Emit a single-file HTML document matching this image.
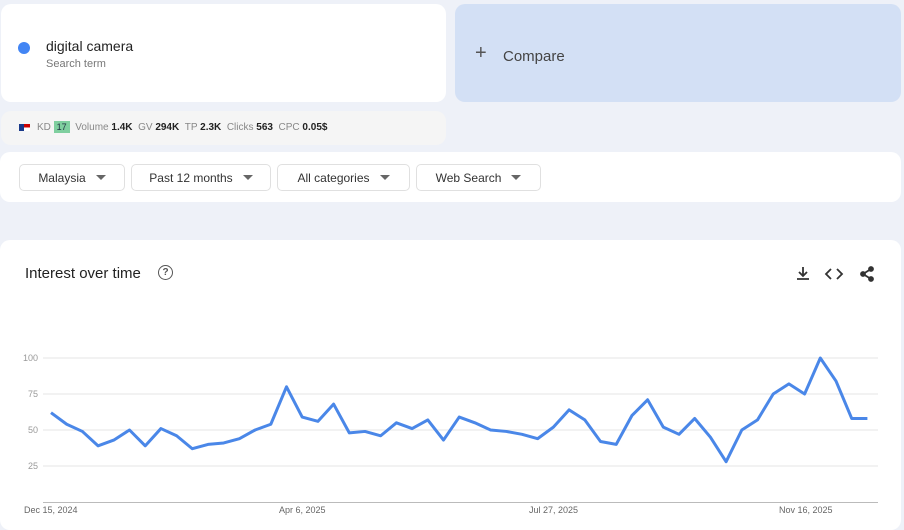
<!DOCTYPE html>
<html><head><meta charset="utf-8"><style>
body{margin:0;width:904px;height:524px;background:#eef1f8;font-family:"Liberation Sans",sans-serif;position:relative;overflow:hidden}
.card{position:absolute;background:#fff;border-radius:10px}
.dd{position:absolute;top:164px;height:27px;border:1px solid #e0e0e0;border-radius:5px;font-size:12px;color:#333;display:flex;align-items:center;justify-content:center;gap:10px;box-sizing:border-box}
.dd i{width:0;height:0;border-left:5px solid transparent;border-right:5px solid transparent;border-top:5px solid #666}
.yl{position:absolute;left:18px;width:20px;text-align:right;font-size:9px;color:#999}
.xl{position:absolute;top:505px;font-size:9px;color:#666}
</style></head><body>
<div class="card" style="left:1px;top:4px;width:445px;height:98px">
 <div style="position:absolute;left:17px;top:38px;width:12px;height:12px;border-radius:50%;background:#4285f4"></div>
 <div style="position:absolute;left:45px;top:34px;font-size:14px;color:#222">digital camera</div>
 <div style="position:absolute;left:45px;top:54px;font-size:11px;color:#777">Search term</div>
</div>
<div class="card" style="left:455px;top:4px;width:446px;height:98px;background:#d3e0f5">
 <div style="position:absolute;left:20px;top:38px;font-size:20px;color:#555">+</div>
 <div style="position:absolute;left:48px;top:44px;font-size:15px;color:#444">Compare</div>
</div>
<div class="card" style="left:1px;top:111px;width:445px;height:34px;background:#f5f5f5;font-size:10px;color:#888">
 <div style="position:absolute;left:18px;top:13px;width:11px;height:7px;background:linear-gradient(#c00 0 50%,#fff 50%);border-left:5px solid #1a3a8a;box-sizing:border-box"></div>
 <div style="position:absolute;left:36px;top:11px;white-space:nowrap">KD <span style="background:#7fcf9f;color:#234;padding:1px 3px;font-size:9px">17</span> &nbsp;Volume <b style="color:#222">1.4K</b> &nbsp;GV <b style="color:#222">294K</b> &nbsp;TP <b style="color:#222">2.3K</b> &nbsp;Clicks <b style="color:#222">563</b> &nbsp;CPC <b style="color:#222">0.05$</b></div>
</div>
<div class="card" style="left:0;top:152px;width:901px;height:50px"></div>
<div class="dd" style="left:19px;width:106px">Malaysia <i></i></div>
<div class="dd" style="left:131px;width:140px">Past 12 months <i></i></div>
<div class="dd" style="left:277px;width:133px">All categories <i></i></div>
<div class="dd" style="left:416px;width:125px">Web Search <i></i></div>
<div class="card" style="left:0;top:240px;width:901px;height:290px"></div>
<div style="position:absolute;left:25px;top:265px;font-size:15px;color:#222">Interest over time</div>
<div style="position:absolute;left:158px;top:265px;width:13px;height:13px;border:1.5px solid #555;border-radius:50%;font-size:10px;text-align:center;line-height:13px;color:#555;font-weight:bold">?</div>
<svg style="position:absolute;left:794px;top:265px" width="90" height="18" fill="none" stroke="#333" stroke-width="1.8">
 <path d="M9 2v9M5 7l4 4 4-4M3 14h12"/>
 <path d="M37 4l-5 5 5 5M43 4l5 5-5 5"/>
 <circle cx="77" cy="4" r="2" fill="#333"/><circle cx="69" cy="9" r="2" fill="#333"/><circle cx="77" cy="14" r="2" fill="#333"/><path d="M77 4l-8 5 8 5"/>
</svg>
<svg style="position:absolute;left:0;top:0" width="904" height="524">
 <g stroke="#e6e6e6" stroke-width="1"><line x1="43" x2="878" y1="358" y2="358"/><line x1="43" x2="878" y1="394" y2="394"/><line x1="43" x2="878" y1="430" y2="430"/><line x1="43" x2="878" y1="466" y2="466"/></g>
 <line x1="43" x2="878" y1="502.5" y2="502.5" stroke="#bbb"/>
 <g transform="translate(51,502) scale(15.7,-1.44)">
 <polyline vector-effect="non-scaling-stroke" fill="none" stroke="#4a87e8" stroke-width="3" stroke-linejoin="round" points="0,62 1,54 2,49 3,39 4,43 5,50 6,39 7,51 8,46 9,37 10,40 11,41 12,44 13,50 14,54 15,80 16,59 17,56 18,68 19,48 20,49 21,46 22,55 23,51 24,57 25,43 26,59 27,55 28,50 29,49 30,47 31,44 32,52 33,64 34,57 35,42 36,40 37,60 38,71 39,52 40,47 41,58 42,45 43,28 44,50 45,57 46,75 47,82 48,75 49,100 50,84 51,58 52,58"/>
 </g>
</svg>
<div class="yl" style="top:353px">100</div><div class="yl" style="top:389px">75</div><div class="yl" style="top:425px">50</div><div class="yl" style="top:461px">25</div>
<div class="xl" style="left:24px">Dec 15, 2024</div>
<div class="xl" style="left:279px">Apr 6, 2025</div>
<div class="xl" style="left:529px">Jul 27, 2025</div>
<div class="xl" style="left:779px">Nov 16, 2025</div>
</body></html>
